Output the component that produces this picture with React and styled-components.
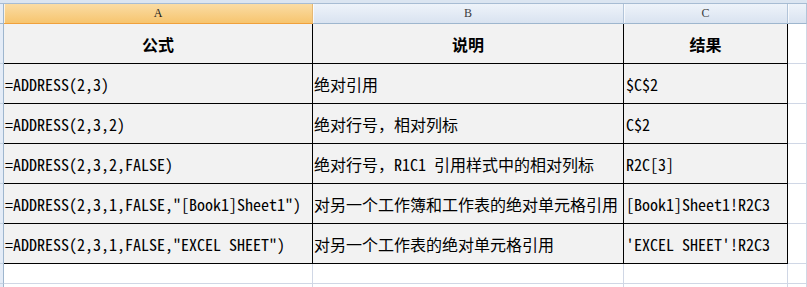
import React from "react"
import styled, { createGlobalStyle } from "styled-components"

const GlobalStyle = createGlobalStyle`
  html, body {
    margin: 0;
    padding: 0;
    background: #ffffff;
  }
  body {
    font-family: "Noto Sans Mono CJK SC", "Noto Sans CJK SC", monospace;
  }
`

const COLS = "4px 309px 311px 164px 1fr"

const Sheet = styled.div`
  width: 807px;
  height: 287px;
  overflow: hidden;
  display: flex;
  flex-direction: column;
`

const TopStrip = styled.div`
  flex-shrink: 0;
  height: 3px;
  background: #dbe5f1;
  border-bottom: 1px solid #a7bcd3;
`

const Row = styled.div`
  flex-shrink: 0;
  display: grid;
  grid-template-columns: ${COLS};
  height: ${(p) => p.$h}px;
`

const RowHead = styled.div`
  background: #e4ecf7;
  border-right: 1px solid #9eb6ce;
  border-bottom: 1px solid ${(p) => (p.$top ? "#9eb6ce" : "#c5d3e3")};
`

const ColHead = styled.div`
  display: flex;
  align-items: center;
  justify-content: center;
  font-family: "Liberation Serif", "Noto Sans CJK SC", serif;
  font-size: 12px;
  color: ${(p) => (p.$active ? "#1a1a1a" : "#3c3c3c")};
  background: ${(p) =>
    p.$active
      ? "linear-gradient(#fadca4, #f7c56f)"
      : "linear-gradient(#eef3fa, #d9e3f0)"};
  border-right: 1px solid ${(p) => (p.$active ? "#e6b873" : "#b2c4d9")};
  border-bottom: 1px solid ${(p) => (p.$active ? "#f0a13c" : "#9eb6ce")};
  box-shadow: inset 1px 0 0 rgba(255, 255, 255, 0.7);
`

const Cell = styled.div`
  display: flex;
  align-items: center;
  justify-content: ${(p) => (p.$head ? "center" : "flex-start")};
  padding-left: ${(p) => (p.$head ? 0 : p.$pad || 1)}px;
  background: #f2f2f2;
  border-right: 1px solid #000;
  border-bottom: 1px solid #000;
  font-size: 16px;
  font-weight: ${(p) => (p.$head ? 700 : 400)};
  color: #000;
  white-space: nowrap;
  overflow: hidden;
  line-height: 1;
`

const Blank = styled.div`
  background: #ffffff;
  border-right: 1px solid ${(p) => (p.$edge ? "#000" : "#d0d7e5")};
  border-bottom: 1px solid #d0d7e5;
`

const rows = [
  ["=ADDRESS(2,3)", "绝对引用", "$C$2"],
  ["=ADDRESS(2,3,2)", "绝对行号，相对列标", "C$2"],
  ["=ADDRESS(2,3,2,FALSE)", "绝对行号，R1C1 引用样式中的相对列标", "R2C[3]"],
  ["=ADDRESS(2,3,1,FALSE,\"[Book1]Sheet1\")", "对另一个工作簿和工作表的绝对单元格引用", "[Book1]Sheet1!R2C3"],
  ["=ADDRESS(2,3,1,FALSE,\"EXCEL SHEET\")", "对另一个工作表的绝对单元格引用", "'EXCEL SHEET'!R2C3"],
]

export default function App() {
  return (
    <Sheet>
      <GlobalStyle />
      <TopStrip />
      <Row $h={20}>
        <RowHead $top />
        <ColHead $active>A</ColHead>
        <ColHead>B</ColHead>
        <ColHead>C</ColHead>
        <ColHead />
      </Row>
      <Row $h={40}>
        <RowHead />
        <Cell $head>公式</Cell>
        <Cell $head>说明</Cell>
        <Cell $head>结果</Cell>
        <Blank />
      </Row>
      {rows.map((r, i) => (
        <Row $h={40} key={i}>
          <RowHead />
          <Cell>{r[0]}</Cell>
          <Cell>{r[1]}</Cell>
          <Cell $pad={2}>{r[2]}</Cell>
          <Blank />
        </Row>
      ))}
      <Row $h={20}>
        <RowHead />
        <Blank />
        <Blank />
        <Blank />
        <Blank />
      </Row>
      <Row $h={20}>
        <RowHead />
        <Blank />
        <Blank />
        <Blank />
        <Blank />
      </Row>
    </Sheet>
  )
}
